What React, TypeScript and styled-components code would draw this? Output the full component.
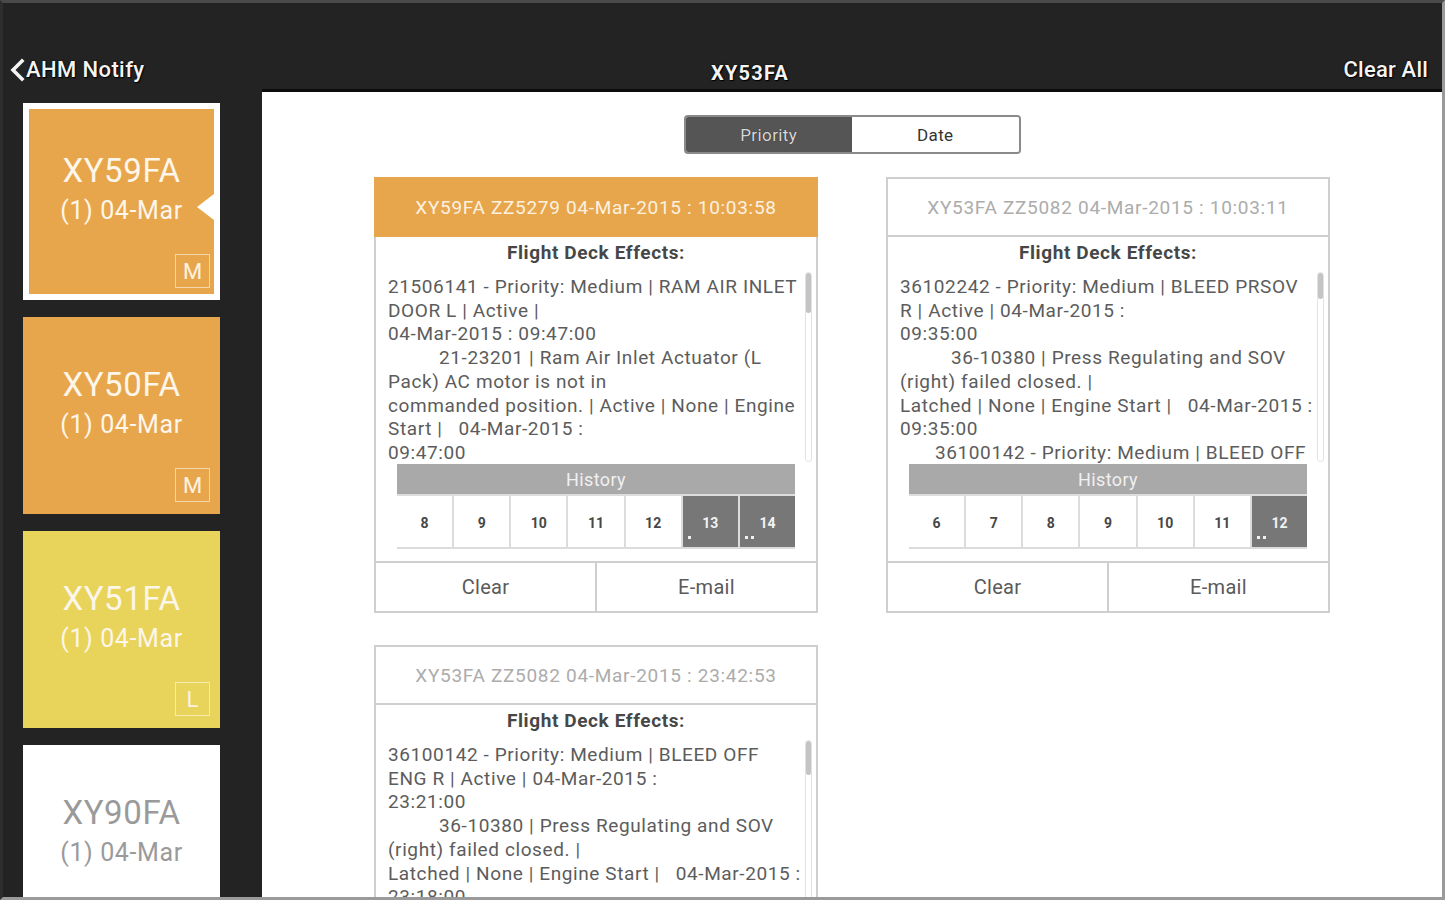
import React from "react";
import styled, { createGlobalStyle, css } from "styled-components";

const GlobalStyle = createGlobalStyle`
  html, body {
    margin: 0;
    padding: 0;
    background: #232323;
    font-family: Roboto, "Noto Sans", "Liberation Sans", sans-serif;
  }
  * { box-sizing: border-box; }
`;

const ORANGE = "#e8a64c";
const YELLOW = "#e8d45a";

const Frame = styled.div`
  width: 1445px;
  height: 900px;
  display: flex;
  flex-direction: column;
  background: #232323;
  border-top: 3px solid #4a4a4a;
  border-left: 3px solid #2e2e2e;
  border-right: 3px solid #9a9a9a;
  border-bottom: 3px solid #9a9a9a;
  overflow: hidden;
`;

const TopBar = styled.header`
  height: 86px;
  flex-shrink: 0;
  display: flex;
  align-items: flex-end;
  padding-bottom: 6px;
  color: #f4f4f4;
  text-shadow: 0 0 2px #000, 1px 1px 1px #000;
`;

const BackButton = styled.div`
  width: 259px;
  display: flex;
  align-items: center;
  padding-left: 6px;
  font-size: 22px;
  font-weight: 500;
  line-height: 26px;
  letter-spacing: 0.4px;
`;

const Title = styled.div`
  flex: 1;
  text-align: center;
  font-size: 20px;
  font-weight: 700;
  line-height: 26px;
  letter-spacing: 1.2px;
  margin-bottom: -3px;
`;

const ClearAll = styled.div`
  width: 204px;
  text-align: right;
  padding-right: 14px;
  font-size: 22px;
  font-weight: 500;
  line-height: 26px;
  letter-spacing: 0.2px;
`;

const Main = styled.div`
  flex: 1;
  min-height: 0;
  display: flex;
`;

const Sidebar = styled.aside`
  width: 259px;
  flex-shrink: 0;
  padding: 14px 0 0 20px;
  display: flex;
  flex-direction: column;
  gap: 17px;
`;

const Tail = styled.div<{ $tone: string }>`
  position: relative;
  width: 197px;
  height: 197px;
  flex-shrink: 0;
  display: flex;
  flex-direction: column;
  align-items: center;
  padding-top: 49px;
  background: ${(p) => p.$tone};
  color: ${(p) => (p.$tone === "#ffffff" ? "#9a9a9a" : "#fdf6ea")};
`;

const SelectedTail = styled(Tail)`
  border: 6px solid #ffffff;
  padding-top: 43px;
  &::after {
    content: "";
    position: absolute;
    right: 0;
    top: 85px;
    border-style: solid;
    border-width: 13px 17px 13px 0;
    border-color: transparent #ffffff transparent transparent;
  }
`;

const TailName = styled.div`
  font-size: 33px;
  line-height: 38px;
  letter-spacing: 0.6px;
`;

const TailDate = styled.div`
  font-size: 25px;
  line-height: 30px;
  margin-top: 6px;
  letter-spacing: 0.6px;
`;

const Badge = styled.div<{ $inset?: boolean }>`
  position: absolute;
  right: ${(p) => (p.$inset ? 4 : 10)}px;
  bottom: ${(p) => (p.$inset ? 6 : 12)}px;
  width: 35px;
  height: 34px;
  border: 1px solid rgba(255, 255, 255, 0.55);
  display: flex;
  align-items: center;
  justify-content: center;
  font-size: 22px;
  color: #fdf3e0;
`;

const Content = styled.main`
  flex: 1;
  background: #ffffff;
  border-top: 3px solid #0c0c0c;
  padding-top: 23px;
  display: flex;
  flex-direction: column;
  align-items: center;
  overflow: hidden;
`;

const Segmented = styled.div`
  width: 337px;
  height: 39px;
  display: flex;
  border: 2px solid #8a8a8a;
  border-radius: 4px;
  overflow: hidden;
  flex-shrink: 0;
`;

const Segment = styled.div<{ $active?: boolean }>`
  flex: 1;
  display: flex;
  align-items: center;
  justify-content: center;
  font-size: 17px;
  background: ${(p) => (p.$active ? "#555555" : "#ffffff")};
  color: ${(p) => (p.$active ? "#d8d8d8" : "#333333")};
  text-shadow: ${(p) => (p.$active ? "0 0 1px #222" : "none")};
  letter-spacing: 0.4px;
`;

const Grid = styled.div`
  margin-top: 23px;
  display: grid;
  grid-template-columns: 444px 444px;
  column-gap: 68px;
  row-gap: 32px;
`;

const Card = styled.section`
  border: 2px solid #cfcfcf;
  background: #ffffff;
  display: flex;
  flex-direction: column;
`;

const CardHeader = styled.div<{ $hot?: boolean }>`
  display: flex;
  align-items: center;
  justify-content: center;
  font-size: 19px;
  letter-spacing: 0.7px;
  ${(p) =>
    p.$hot
      ? css`
          height: 60px;
          margin: -2px -2px 0;
          background: ${ORANGE};
          color: #fbf1e0;
        `
      : css`
          height: 58px;
          background: #ffffff;
          color: #acacac;
          border-bottom: 2px solid #cfcfcf;
        `}
`;

const CardBody = styled.div`
  padding: 2px 0 12px;
`;

const FdeTitle = styled.div`
  text-align: center;
  font-size: 19px;
  font-weight: 700;
  line-height: 28px;
  letter-spacing: 0.6px;
  color: #474747;
`;

const ScrollArea = styled.div`
  position: relative;
  height: 197px;
  padding: 8px 18px 0 12px;
  overflow: hidden;
`;

const Line = styled.div<{ $indent?: number }>`
  font-size: 19px;
  line-height: 23.7px;
  color: #5c5c5c;
  white-space: pre;
  letter-spacing: 0.6px;
  padding-left: ${(p) => p.$indent ?? 0}px;
`;

const ScrollTrack = styled.div`
  position: absolute;
  right: 4px;
  top: 5px;
  width: 7px;
  height: 190px;
  border: 1px solid #e2e2e2;
  border-radius: 4px;
`;

const ScrollThumb = styled.div<{ $h: number }>`
  width: 100%;
  height: ${(p) => p.$h}px;
  background: #c4c4c4;
  border-radius: 4px;
`;

const History = styled.div`
  margin: 0 21px;
`;

const HistoryHead = styled.div`
  height: 30px;
  background: #a9a9a9;
  color: #f0f0f0;
  font-size: 18px;
  letter-spacing: 0.4px;
  display: flex;
  align-items: center;
  justify-content: center;
`;

const Days = styled.div`
  display: grid;
  grid-template-columns: repeat(7, 1fr);
  gap: 2px;
  background: #dcdcdc;
  padding: 2px 0;
`;

const Day = styled.div<{ $dark?: boolean }>`
  position: relative;
  height: 51px;
  display: flex;
  align-items: center;
  justify-content: center;
  padding-top: 3px;
  font-size: 14px;
  font-weight: 700;
  background: ${(p) => (p.$dark ? "#777777" : "#ffffff")};
  color: ${(p) => (p.$dark ? "#f2f2f2" : "#474747")};
`;

const Dots = styled.div`
  position: absolute;
  left: 5px;
  bottom: 8px;
  display: flex;
  gap: 3px;
`;

const Dot = styled.span`
  width: 3px;
  height: 3px;
  background: #f0f0f0;
`;

const Footer = styled.div`
  height: 50px;
  display: flex;
  border-top: 2px solid #cfcfcf;
`;

const FooterButton = styled.div`
  flex: 1;
  display: flex;
  align-items: center;
  justify-content: center;
  font-size: 20px;
  letter-spacing: 0.3px;
  color: #5a5a5a;
  & + & {
    border-left: 2px solid #cfcfcf;
  }
`;

type TextLine = { t: string; i?: number };

type Alert = {
  header: string;
  hot?: boolean;
  thumb: number;
  lines: TextLine[];
  days?: { n: number; dots?: number }[];
};

const alerts: Alert[] = [
  {
    header: "XY59FA ZZ5279 04-Mar-2015 : 10:03:58",
    hot: true,
    thumb: 40,
    lines: [
      { t: "21506141 - Priority: Medium | RAM AIR INLET" },
      { t: "DOOR L | Active |" },
      { t: "04-Mar-2015 : 09:47:00" },
      { t: "21-23201 | Ram Air Inlet Actuator (L", i: 51 },
      { t: "Pack) AC motor is not in" },
      { t: "commanded position. | Active | None | Engine" },
      { t: "Start |   04-Mar-2015 :" },
      { t: "09:47:00" },
    ],
    days: [
      { n: 8 },
      { n: 9 },
      { n: 10 },
      { n: 11 },
      { n: 12 },
      { n: 13, dots: 1 },
      { n: 14, dots: 2 },
    ],
  },
  {
    header: "XY53FA ZZ5082 04-Mar-2015 : 10:03:11",
    thumb: 26,
    lines: [
      { t: "36102242 - Priority: Medium | BLEED PRSOV" },
      { t: "R | Active | 04-Mar-2015 :" },
      { t: "09:35:00" },
      { t: "36-10380 | Press Regulating and SOV", i: 51 },
      { t: "(right) failed closed. |" },
      { t: "Latched | None | Engine Start |   04-Mar-2015 :" },
      { t: "09:35:00" },
      { t: "36100142 - Priority: Medium | BLEED OFF", i: 35 },
    ],
    days: [
      { n: 6 },
      { n: 7 },
      { n: 8 },
      { n: 9 },
      { n: 10 },
      { n: 11 },
      { n: 12, dots: 2 },
    ],
  },
  {
    header: "XY53FA ZZ5082 04-Mar-2015 : 23:42:53",
    thumb: 34,
    lines: [
      { t: "36100142 - Priority: Medium | BLEED OFF" },
      { t: "ENG R | Active | 04-Mar-2015 :" },
      { t: "23:21:00" },
      { t: "36-10380 | Press Regulating and SOV", i: 51 },
      { t: "(right) failed closed. |" },
      { t: "Latched | None | Engine Start |   04-Mar-2015 :" },
      { t: "23:18:00" },
      { t: "36100142 - Priority: Medium | BLEED OFF", i: 35 },
    ],
  },
];

const tails = [
  { name: "XY59FA", tone: ORANGE, badge: "M", selected: true },
  { name: "XY50FA", tone: ORANGE, badge: "M" },
  { name: "XY51FA", tone: YELLOW, badge: "L" },
  { name: "XY90FA", tone: "#ffffff" },
];

function Chevron() {
  return (
    <svg width="16" height="24" viewBox="0 0 16 24" style={{ marginRight: 1 }}>
      <path
        d="M13 3 L4 12 L13 21"
        fill="none"
        stroke="#f4f4f4"
        strokeWidth="3.6"
        strokeLinecap="square"
      />
    </svg>
  );
}

function AlertCard({ alert }: { alert: Alert }) {
  return (
    <Card>
      <CardHeader $hot={alert.hot}>{alert.header}</CardHeader>
      <CardBody>
        <FdeTitle>Flight Deck Effects:</FdeTitle>
        <ScrollArea>
          {alert.lines.map((l, idx) => (
            <Line key={idx} $indent={l.i}>
              {l.t}
            </Line>
          ))}
          <ScrollTrack>
            <ScrollThumb $h={alert.thumb} />
          </ScrollTrack>
        </ScrollArea>
        {alert.days && (
          <History>
            <HistoryHead>History</HistoryHead>
            <Days>
              {alert.days.map((d) => (
                <Day key={d.n} $dark={!!d.dots}>
                  {d.n}
                  {d.dots ? (
                    <Dots>
                      {Array.from({ length: d.dots }).map((_, k) => (
                        <Dot key={k} />
                      ))}
                    </Dots>
                  ) : null}
                </Day>
              ))}
            </Days>
          </History>
        )}
      </CardBody>
      {alert.days && (
        <Footer>
          <FooterButton>Clear</FooterButton>
          <FooterButton>E-mail</FooterButton>
        </Footer>
      )}
    </Card>
  );
}

export default function App() {
  return (
    <>
      <GlobalStyle />
      <Frame>
        <TopBar>
          <BackButton>
            <Chevron />
            AHM Notify
          </BackButton>
          <Title>XY53FA</Title>
          <ClearAll>Clear All</ClearAll>
        </TopBar>
        <Main>
          <Sidebar>
            {tails.map((t) => {
              const Box = t.selected ? SelectedTail : Tail;
              return (
                <Box key={t.name} $tone={t.tone}>
                  <TailName>{t.name}</TailName>
                  <TailDate>(1) 04-Mar</TailDate>
                  {t.badge && <Badge $inset={t.selected}>{t.badge}</Badge>}
                </Box>
              );
            })}
          </Sidebar>
          <Content>
            <Segmented>
              <Segment $active>Priority</Segment>
              <Segment>Date</Segment>
            </Segmented>
            <Grid>
              {alerts.map((a) => (
                <AlertCard key={a.header} alert={a} />
              ))}
            </Grid>
          </Content>
        </Main>
      </Frame>
    </>
  );
}
